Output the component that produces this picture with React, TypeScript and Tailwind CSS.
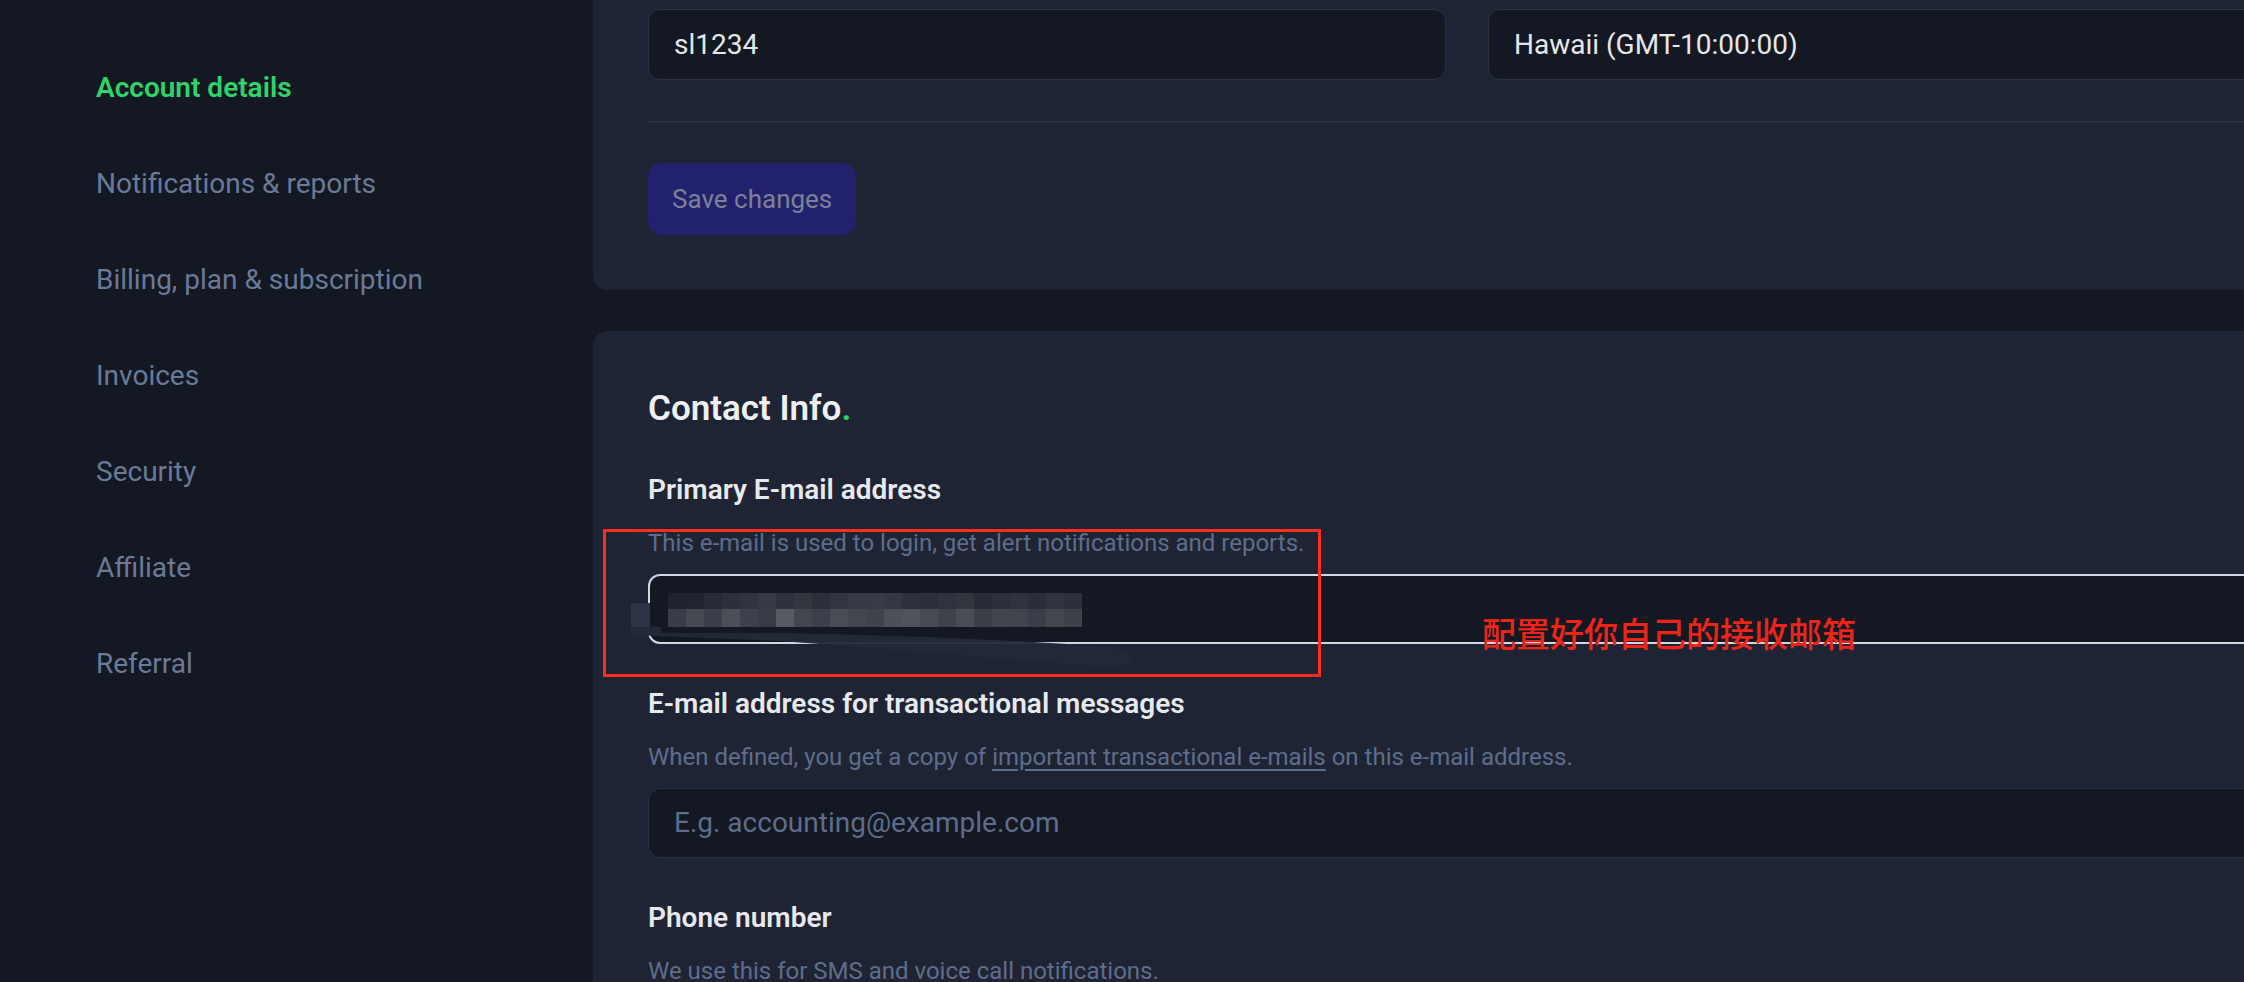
import { ChevronDown } from "lucide-react";

const navItems = [
  "Account details",
  "Notifications & reports",
  "Billing, plan & subscription",
  "Invoices",
  "Security",
  "Affiliate",
  "Referral",
];

// pixelated (redacted) e-mail value
const mosaicTop = [
  "#1e232d", "#20252f", "#262b35", "#2b303a", "#2f343e", "#343943", "#2d323c", "#31363f",
  "#2a2f39", "#30353f", "#353a44", "#363b45", "#333842", "#2c313b", "#2a2f39", "#2e333d",
  "#31363f", "#272c36", "#2b303a", "#2e333d", "#292e38", "#2f343e", "#2b303a",
];
const mosaicBottom = [
  "#383d47", "#444952", "#3a3f49", "#4a4f58", "#3c414b", "#373c46", "#555a63", "#41464f",
  "#3b404a", "#474c55", "#42474f", "#3e434c", "#4b5059", "#4e535c", "#464b54", "#3d424b",
  "#484d56", "#3a3f48", "#40454e", "#3f444d", "#393e48", "#43484f", "#3c414a",
];

function Field({
  label,
  children,
  input,
}: {
  label: string;
  children: React.ReactNode;
  input: React.ReactNode;
}) {
  return (
    <div className="flex flex-col">
      <div className="text-[28px] leading-[36px] font-semibold text-[#e7e9ef]">{label}</div>
      <div className="mt-[19px] text-[24px] leading-[32px] text-[#5f6d8c]">{children}</div>
      <div className="mt-[15px]">{input}</div>
    </div>
  );
}

export default function App() {
  return (
    <div className="w-[2244px] h-[982px] overflow-hidden bg-[#131823] flex font-['Roboto',sans-serif]">
      {/* Sidebar */}
      <aside className="w-[593px] shrink-0 pl-[96px] pt-[70px] flex flex-col gap-[60px]">
        {navItems.map((item, i) => (
          <div
            key={item}
            className={
              i === 0
                ? "text-[28px] leading-[36px] font-semibold text-[#2fd36b]"
                : "text-[28px] leading-[36px] text-[#6b7a99]"
            }
          >
            {item}
          </div>
        ))}
      </aside>

      {/* Main */}
      <main className="w-[1748px] shrink-0 flex flex-col gap-[41px]">
        {/* Account card (scrolled) */}
        <section className="-mt-[47px] pt-[56px] pb-[55px] px-[55px] bg-[#1e2433] rounded-[14px]">
          <div className="grid grid-cols-2 gap-[42px]">
            <div className="h-[71px] rounded-[12px] border-[1.5px] border-[#2b3242] bg-[#131823] px-[25px] flex items-center text-[28px] text-[#e5e7eb]">
              sl1234
            </div>
            <div className="h-[71px] rounded-[12px] border-[1.5px] border-[#2b3242] bg-[#131823] pl-[25px] pr-[20px] flex items-center justify-between text-[28px] text-[#e5e7eb]">
              <span>Hawaii (GMT-10:00:00)</span>
              <ChevronDown size={26} strokeWidth={2} className="text-[#e5e7eb]" />
            </div>
          </div>
          <div className="mt-[41px] h-[2px] bg-[#2a3040]" />
          <button className="mt-[40px] h-[72px] px-[24px] rounded-[14px] bg-[#22216d] text-[26px] text-[#7d8096]">
            Save changes
          </button>
        </section>

        {/* Contact info card */}
        <section className="relative pt-[57px] px-[55px] pb-[60px] bg-[#1e2433] rounded-[14px] flex flex-col gap-[42px]">
          <h2 className="text-[35px] leading-[42px] font-semibold text-[#eef0f4]">
            Contact Info<span className="text-[#2fd36b]">.</span>
          </h2>

          <Field
            label="Primary E-mail address"
            input={
              <div className="relative h-[70px] rounded-[12px] border-2 border-[#d3d8e3] bg-[#131823]">
                <div className="absolute left-[-19px] top-[27px] w-[19px] h-[31px] bg-[#2e3446]" />
                <div className="absolute left-[18px] top-[17px] flex flex-col">
                  <div className="flex">
                    {mosaicTop.map((c, i) => (
                      <div key={i} className="w-[18px] h-[16px]" style={{ backgroundColor: c }} />
                    ))}
                  </div>
                  <div className="flex">
                    {mosaicBottom.map((c, i) => (
                      <div key={i} className="w-[18px] h-[18px]" style={{ backgroundColor: c }} />
                    ))}
                  </div>
                </div>
                <svg
                  className="absolute left-[-19px] top-[51px]"
                  width="520"
                  height="46"
                  viewBox="0 0 520 46"
                >
                  <path
                    d="M0 0 L30 0 L30 6 L150 6 C270 8 400 14 480 20 C505 24 505 40 482 40 C400 34 300 26 150 14 L0 8 Z"
                    fill="#232938"
                    opacity="0.95"
                  />
                </svg>
              </div>
            }
          >
            This e-mail is used to login, get alert notifications and reports.
          </Field>

          <Field
            label="E-mail address for transactional messages"
            input={
              <div className="h-[70px] rounded-[12px] border-[1.5px] border-[#2b3242] bg-[#131823] px-[25px] flex items-center text-[28px] text-[#5f6d8c]">
                E.g. accounting@example.com
              </div>
            }
          >
            When defined, you get a copy of{" "}
            <span className="underline underline-offset-4">important transactional e-mails</span> on this
            e-mail address.
          </Field>

          <Field label="Phone number" input={<div className="h-[70px]" />}>
            We use this for SMS and voice call notifications.
          </Field>

          {/* annotation */}
          <div className="absolute left-[10px] top-[198px] w-[718px] h-[148px] border-[3px] border-[#ff2b1c]" />
          <div className="absolute left-[889px] top-[283px] text-[34px] leading-[38px] font-medium text-[#ee2419] font-['Noto_Sans_CJK_SC',sans-serif]">
            配置好你自己的接收邮箱
          </div>
        </section>
      </main>
    </div>
  );
}
